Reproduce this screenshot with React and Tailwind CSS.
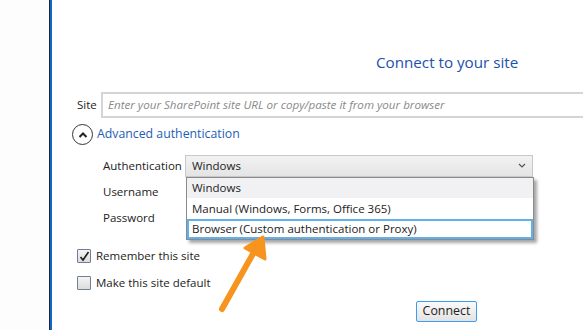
import React from "react";

const font = { fontFamily: '"Segoe UI", "Open Sans", "Noto Sans", sans-serif' };

const Check = ({ checked }) => (
  <div className="w-[14px] h-[14px] border border-[#6f7f99] rounded-[1px] bg-gradient-to-b from-[#f4f4f4] to-[#dcdcdc] flex items-center justify-center">
    {checked && (
      <svg width="11" height="11" viewBox="0 0 11 11">
        <path d="M1.5 6 L4 9 L9.5 1" fill="none" stroke="#222" strokeWidth="1.7" />
      </svg>
    )}
  </div>
);

const Arrow = () => (
  <svg className="absolute left-[210px] top-[228px]" width="70" height="92" viewBox="0 0 70 92">
    <path d="M12 81 L44 24" stroke="#f7941d" strokeWidth="6" strokeLinecap="round" fill="none" />
    <path d="M53 9 L35 20 L55 31 Z" fill="#f7941d" stroke="#f7941d" strokeWidth="3" strokeLinejoin="round" />
  </svg>
);

export default function App() {
  return (
    <div className="w-[583px] h-[330px] bg-white flex overflow-hidden relative text-[#222]" style={font}>
      <div className="w-[49px] shrink-0 bg-[#fdfdfd]" />
      <div className="w-px shrink-0 bg-[#1b2230]" />
      <div className="w-[2px] shrink-0 bg-[#1466c8]" />
      <div className="flex-1 flex flex-col pl-[25px] pt-[51px] text-[11.5px]">
        <div className="pl-[299px] text-[15.2px] leading-[22px] text-[#1d4fae]">Connect to your site</div>
        <div className="flex items-center mt-[19px] h-[26px]">
          <span className="w-[24px]">Site</span>
          <div className="flex-1 h-[26px] -mr-[10px] border-2 border-[#d5d5d5] flex items-center pl-[5px] text-[11.6px] italic text-[#8a8a8a]">
            Enter your SharePoint site URL or copy/paste it from your browser
          </div>
        </div>
        <div className="flex items-center -ml-[5px] mt-[6px] h-[21px] gap-[4px]">
          <div className="w-[21px] h-[21px] rounded-full border-[1.5px] border-[#333] flex items-center justify-center">
            <svg width="10" height="8" viewBox="0 0 10 8">
              <path d="M1.5 6 L5 2.5 L8.5 6" fill="none" stroke="#222" strokeWidth="2" />
            </svg>
          </div>
          <span className="text-[#1f5eb5] text-[12.3px]">Advanced authentication</span>
        </div>
        <div className="flex items-center mt-[10px] pl-[26px] h-[21px]">
          <span className="w-[82px]">Authentication</span>
          <div className="w-[348px] h-[22px] border border-[#c9c9c9] bg-gradient-to-b from-[#f2f2f2] to-[#e4e4e4] flex items-center justify-between pl-[6px] pr-[6px]">
            <span>Windows</span>
            <svg width="8" height="5" viewBox="0 0 8 5">
              <path d="M1 1 L4 4 L7 1" fill="none" stroke="#555" strokeWidth="1.2" />
            </svg>
          </div>
        </div>
        <div className="pl-[26px] mt-[6px] h-[20px] flex items-center">Username</div>
        <div className="pl-[26px] mt-[6px] h-[20px] flex items-center">Password</div>
        <div className="flex items-center gap-[5px] mt-[19px] h-[18px]">
          <Check checked />
          <span>Remember this site</span>
        </div>
        <div className="flex items-center gap-[5px] mt-[9px] h-[18px]">
          <Check />
          <span>Make this site default</span>
        </div>
        <div className="pl-[339px] mt-[9px]">
          <button className="w-[61px] h-[21px] border border-[#3d9cf0] rounded-[2px] bg-gradient-to-b from-[#fafafa] to-[#e3e3e3] flex items-center justify-center text-[12.4px] text-[#222]">
            Connect
          </button>
        </div>
      </div>
      <div className="absolute left-[186px] top-[177px] w-[348px] h-[63px] bg-white border border-[#8a8a8a] shadow-[3px_3px_3px_rgba(0,0,0,0.35)] flex flex-col text-[11.5px]">
        <div className="h-[20px] bg-[#f1f1f3] flex items-center pl-[5px]">Windows</div>
        <div className="h-[21px] flex items-center pl-[5px]">Manual (Windows, Forms, Office 365)</div>
        <div className="h-[20px] border-2 border-[#5fb0ec] flex items-center pl-[3px]">Browser (Custom authentication or Proxy)</div>
      </div>
      <Arrow />
    </div>
  );
}
